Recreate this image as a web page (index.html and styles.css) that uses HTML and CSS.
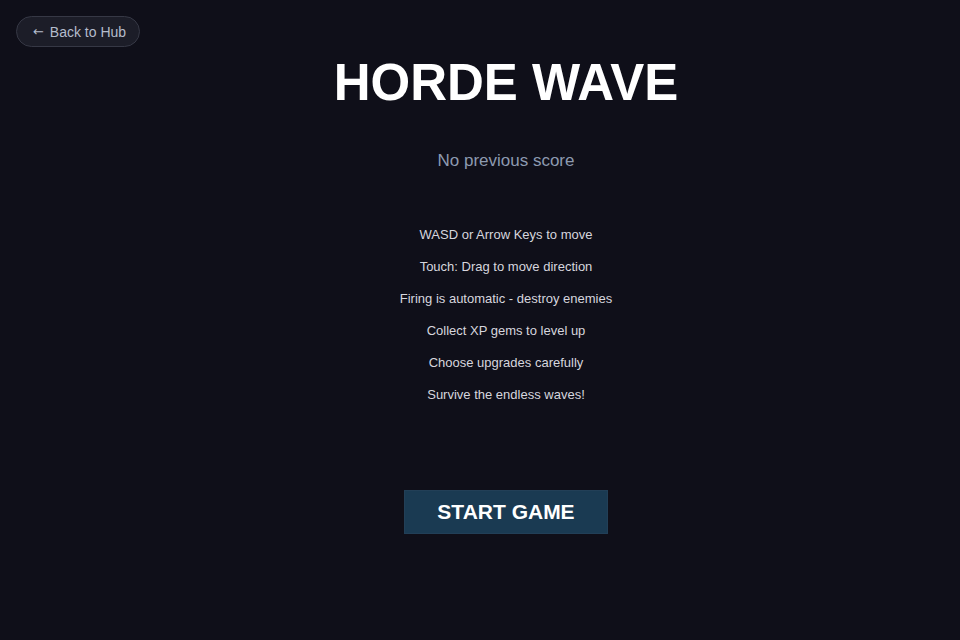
FILE: index.html
```html
<!DOCTYPE html>
<html lang="en">
<head>
<meta charset="utf-8">
<title>Horde Wave</title>
<link rel="stylesheet" href="styles.css">
</head>
<body>
<a class="back" href="#"><span class="arrow">←</span> Back to Hub</a>
<main class="stage">
  <h1 class="title">HORDE WAVE</h1>
  <p class="score">No previous score</p>
  <ul class="help">
    <li>WASD or Arrow Keys to move</li>
    <li>Touch: Drag to move direction</li>
    <li>Firing is automatic - destroy enemies</li>
    <li>Collect XP gems to level up</li>
    <li>Choose upgrades carefully</li>
    <li>Survive the endless waves!</li>
  </ul>
  <button class="start">START GAME</button>
</main>
</body>
</html>
```
FILE: styles.css
```css
html, body {
  margin: 0;
  padding: 0;
  height: 100%;
  background: #0f0f19;
  font-family: "Liberation Sans", Arial, sans-serif;
  overflow: hidden;
}

.back {
  position: absolute;
  left: 16px;
  top: 16px;
  box-sizing: border-box;
  height: 31px;
  width: 124px;
  display: flex;
  align-items: center;
  justify-content: center;
  gap: 6px;
  padding-left: 3px;
  border: 1px solid #363845;
  border-radius: 16px;
  background: #1c1d28;
  color: #b4bccc;
  font-size: 14px;
  text-decoration: none;
}

.arrow {
  font-family: "DejaVu Sans", sans-serif;
  font-size: 13px;
  line-height: 14px;
}

.stage {
  display: flex;
  flex-direction: column;
  align-items: center;
  padding-top: 57px;
  padding-left: 52px;
}

.title {
  margin: 0;
  font-size: 51px;
  line-height: 51px;
  font-weight: bold;
  color: #ffffff;
}

.score {
  margin: 43px 0 0;
  font-size: 17px;
  line-height: 20px;
  color: #8d9ab0;
}

.help {
  list-style: none;
  margin: 48px 0 0;
  padding: 0;
  text-align: center;
  font-size: 13px;
  line-height: 32px;
  color: #d6d6de;
}

.start {
  margin-top: 79px;
  width: 204px;
  height: 44px;
  border: 1px solid #223f57;
  background: #1a3a52;
  color: #ffffff;
  font-family: "Liberation Sans", Arial, sans-serif;
  font-size: 21px;
  font-weight: bold;
  padding: 0;
}
```
